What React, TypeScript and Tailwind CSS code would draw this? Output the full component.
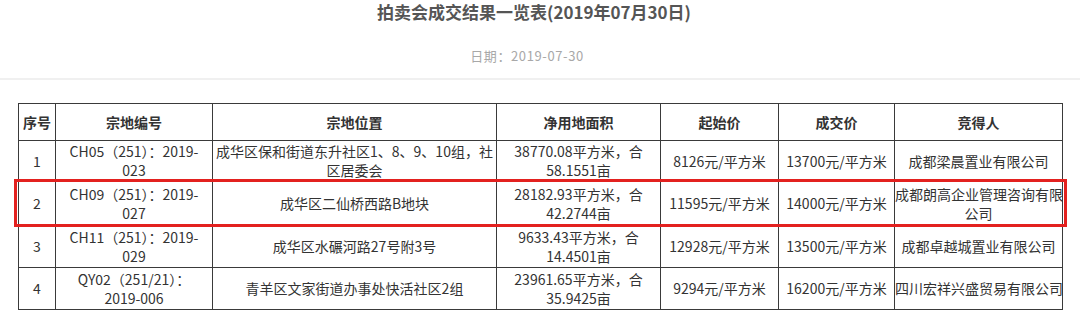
import React from "react";

const cellBase =
  "border border-[#3a3a3a] text-center align-middle p-0 text-[14px] leading-[19px] text-[#333]";

type Row = {
  h: string;
  cells: React.ReactNode[];
};

const rows: Row[] = [
  {
    h: "h-[41px]",
    cells: [
      "1",
      <>CH05（251）：2019-<br />023</>,
      <>成华区保和街道东升社区1、8、9、10组，社<br />区居委会</>,
      <>38770.08平方米，合<br />58.1551亩</>,
      "8126元/平方米",
      "13700元/平方米",
      "成都梁晨置业有限公司",
    ],
  },
  {
    h: "h-[44px]",
    cells: [
      "2",
      <>CH09（251）：2019-<br />027</>,
      "成华区二仙桥西路B地块",
      <>28182.93平方米，合<br />42.2744亩</>,
      "11595元/平方米",
      "14000元/平方米",
      <>成都朗高企业管理咨询有限<br />公司</>,
    ],
  },
  {
    h: "h-[42px]",
    cells: [
      "3",
      <>CH11（251）：2019-<br />029</>,
      "成华区水碾河路27号附3号",
      <>9633.43平方米，合<br />14.4501亩</>,
      "12928元/平方米",
      "13500元/平方米",
      "成都卓越城置业有限公司",
    ],
  },
  {
    h: "h-[42px]",
    cells: [
      "4",
      <>QY02（251/21）：<br />2019-006</>,
      "青羊区文家街道办事处快活社区2组",
      <>23961.65平方米，合<br />35.9425亩</>,
      "9294元/平方米",
      "16200元/平方米",
      "四川宏祥兴盛贸易有限公司",
    ],
  },
];

const headers = ["序号", "宗地编号", "宗地位置", "净用地面积", "起始价", "成交价", "竞得人"];
const widths = ["w-[37px]", "w-[157px]", "w-[284px]", "w-[164px]", "w-[118px]", "w-[116px]", "w-[168px]"];

export default function App() {
  return (
    <div className="relative w-[1080px] h-[318px] overflow-hidden bg-white font-['Noto_Sans_CJK_SC','Noto_Sans',sans-serif]">
      <div className="pt-[1px] h-[26px] text-center text-[17px] leading-[22px] font-bold text-[#555] pr-[12px]">
        拍卖会成交结果一览表(2019年07月30日)
      </div>
      <div className="mt-[21px] text-center text-[13px] leading-[17px] text-[#a8a8a8] pr-[26px] tracking-[0.6px]">
        日期：2019-07-30
      </div>
      <div className="mt-[14px] h-[2px] bg-[#f0f0f0]" />
      <div className="pl-[18px] pt-[23px]">
        <table className="border-collapse table-fixed w-[1044px]">
          <colgroup>
            {widths.map((w, i) => (
              <col key={i} className={w} />
            ))}
          </colgroup>
          <thead>
            <tr className="h-[37px]">
              {headers.map((t, i) => (
                <th key={i} className={`${cellBase} font-bold`}>
                  {t}
                </th>
              ))}
            </tr>
          </thead>
          <tbody>
            {rows.map((r, ri) => (
              <tr key={ri} className={r.h}>
                {r.cells.map((c, ci) => (
                  <td key={ci} className={`${cellBase} whitespace-nowrap overflow-visible`}>
                    {c}
                  </td>
                ))}
              </tr>
            ))}
          </tbody>
        </table>
      </div>
      <div className="absolute left-[14px] top-[179px] w-[1053px] h-[48px] border-[3px] border-[#e3211f]" />
    </div>
  );
}
